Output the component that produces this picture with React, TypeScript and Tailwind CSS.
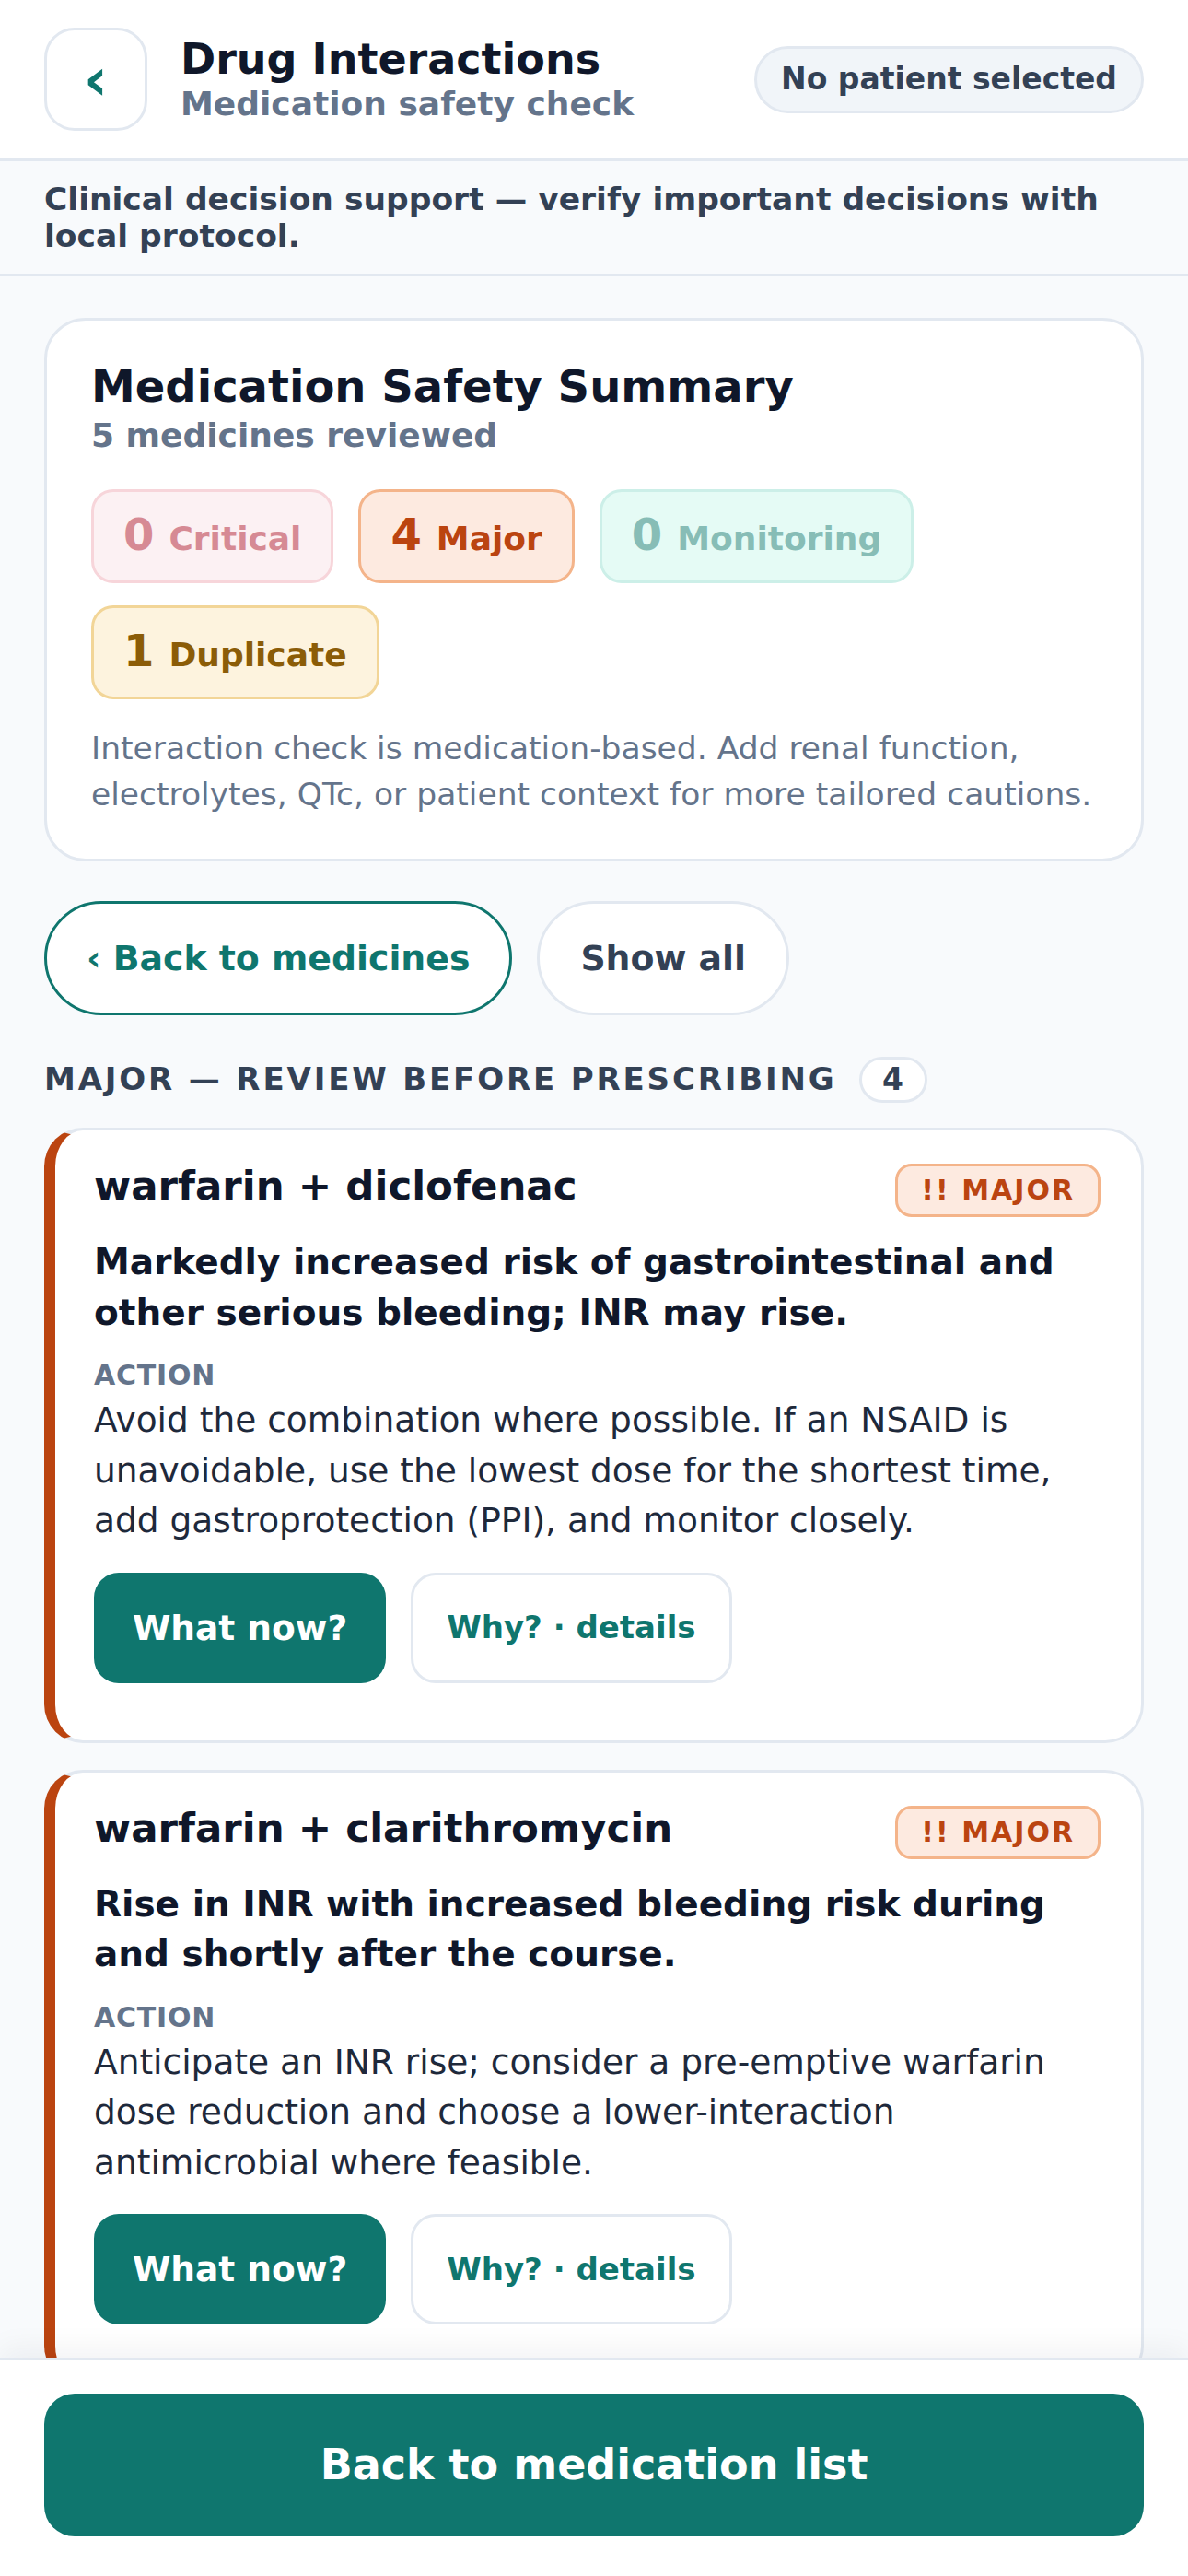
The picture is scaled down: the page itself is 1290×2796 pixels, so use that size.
import React from "react"

type Chip = {
  count: number
  label: string
  className: string
}

type Interaction = {
  id: string
  pair: string
  effect: string
  action: string
}

const chips: Chip[] = [
  { count: 0, label: "Critical", className: "bg-[#fcf1f3] border-[#f7d5da] text-[#d68a94]" },
  { count: 4, label: "Major", className: "bg-[#fdeae0] border-[#f4b48a] text-[#bb4410]" },
  { count: 0, label: "Monitoring", className: "bg-[#e5fbf5] border-[#ccefe8] text-[#87bdb6]" },
  { count: 1, label: "Duplicate", className: "bg-[#fdf3de] border-[#f2d597] text-[#8b5c07]" },
]

const interactions: Interaction[] = [
  {
    id: "warfarin-diclofenac",
    pair: "warfarin + diclofenac",
    effect: "Markedly increased risk of gastrointestinal and other serious bleeding; INR may rise.",
    action:
      "Avoid the combination where possible. If an NSAID is unavoidable, use the lowest dose for the shortest time, add gastroprotection (PPI), and monitor closely.",
  },
  {
    id: "warfarin-clarithromycin",
    pair: "warfarin + clarithromycin",
    effect: "Rise in INR with increased bleeding risk during and shortly after the course.",
    action:
      "Anticipate an INR rise; consider a pre-emptive warfarin dose reduction and choose a lower-interaction antimicrobial where feasible.",
  },
]

function InteractionCard({ item }: { item: Interaction }) {
  return (
    <div className="bg-white border-[3px] border-l-[12px] border-[#e2e8f0] border-l-[#bb4410] rounded-[42px] pt-[36px] pl-[42px] pr-[44px] pb-[62px]">
      <div className="flex items-start justify-between gap-[24px]">
        <h3 className="text-[43.5px] leading-[48px] font-bold text-[#0f172a]">{item.pair}</h3>
        <span className="shrink-0 border-[3px] border-[#f4b48a] bg-[#fdeae0] rounded-[18px] px-[25px] py-[8px] text-[30px] leading-[36px] tracking-[2px] font-bold text-[#bb4410]">
          !! MAJOR
        </span>
      </div>
      <p className="mt-[22px] text-[39px] leading-[54.6px] font-bold text-[#0f172a]">{item.effect}</p>
      <div className="mt-[23px] text-[30px] leading-[36px] tracking-[0.8px] font-bold text-[#64748b]">ACTION</div>
      <p className="mt-[3px] text-[37.5px] leading-[54.5px] text-[#1e293b]">{item.action}</p>
      <div className="mt-[29px] flex gap-[27px]">
        <button className="h-[120px] px-[42px] rounded-[27px] bg-[#0f766e] text-white text-[37.5px] font-bold">
          What now?
        </button>
        <button className="h-[120px] px-[36px] rounded-[27px] border-[3px] border-[#e2e8f0] bg-white text-[#0f766e] text-[34px] font-bold">
          Why? · details
        </button>
      </div>
    </div>
  )
}

export default function App() {
  return (
    <div className="h-[2796px] flex flex-col overflow-hidden bg-[#f8fafc] font-['DejaVu_Sans',sans-serif]">
      {/* Header */}
      <header className="bg-white border-b-[3px] border-[#e2e8f0] px-[48px] py-[30px] flex items-center">
        <button className="w-[112px] h-[112px] shrink-0 border-[3px] border-[#e2e8f0] rounded-[33px] flex items-center justify-center text-[#0f766e]">
          <span className="text-[64px] leading-none font-bold">‹</span>
        </button>
        <div className="ml-[36px] flex-1">
          <h1 className="text-[46px] leading-[52px] font-bold text-[#0f172a]">Drug Interactions</h1>
          <div className="mt-[2px] text-[36px] leading-[42px] font-bold text-[#64748b]">Medication safety check</div>
        </div>
        <span className="h-[73px] px-[26px] flex items-center rounded-full border-[3px] border-[#e2e8f0] bg-[#f1f5f9] text-[33px] font-bold text-[#334155]">
          No patient selected
        </span>
      </header>

      {/* Disclaimer */}
      <div className="px-[48px] py-[21px] border-b-[3px] border-[#e2e8f0] text-[34.5px] leading-[40px] font-bold text-[#334155]">
        Clinical decision support — verify important decisions with local protocol.
      </div>

      {/* Content */}
      <main className="flex-1 overflow-hidden px-[48px] pt-[45px]">
        <section className="bg-white border-[3px] border-[#e2e8f0] rounded-[45px] px-[48px] pt-[46px] pb-[45px]">
          <h2 className="text-[48px] leading-[50px] font-bold text-[#0f172a]">Medication Safety Summary</h2>
          <div className="mt-[7px] text-[36px] leading-[43px] font-bold text-[#64748b]">5 medicines reviewed</div>
          <div className="mt-[37px] flex flex-wrap gap-x-[27px] gap-y-[24px]">
            {chips.map((chip) => (
              <div
                key={chip.label}
                className={`flex items-baseline gap-[16px] px-[32px] py-[18px] rounded-[24px] border-[3px] font-bold ${chip.className}`}
              >
                <span className="text-[48px] leading-[1.2]">{chip.count}</span>
                <span className="text-[36px]">{chip.label}</span>
              </div>
            ))}
          </div>
          <p className="mt-[28px] text-[34.5px] leading-[50px] text-[#64748b]">
            Interaction check is medication-based. Add renal function, electrolytes, QTc, or patient context for more tailored cautions.
          </p>
        </section>

        <div className="mt-[43px] flex gap-[27px]">
          <button className="h-[124px] px-[43px] rounded-full border-[3px] border-[#0f766e] bg-white text-[37.8px] font-bold text-[#0f766e]">
            ‹ Back to medicines
          </button>
          <button className="h-[124px] px-[44px] rounded-full border-[3px] border-[#e2e8f0] bg-white text-[37.8px] font-bold text-[#334155]">
            Show all
          </button>
        </div>

        <div className="mt-[44px] flex items-center gap-[24px]">
          <h2 className="text-[34px] tracking-[2.85px] font-bold text-[#334155]">MAJOR — REVIEW BEFORE PRESCRIBING</h2>
          <span className="w-[74px] h-[50px] flex items-center justify-center rounded-full border-[3px] border-[#e2e8f0] bg-white text-[33px] font-bold text-[#334155]">
            4
          </span>
        </div>

        <div className="mt-[27px] flex flex-col gap-[29px]">
          {interactions.map((item) => (
            <InteractionCard key={item.id} item={item} />
          ))}
        </div>
      </main>

      {/* Footer */}
      <footer className="relative z-10 bg-white border-t-[3px] border-[#e2e8f0] px-[48px] pt-[36px] pb-[43px] shadow-[0_-10px_30px_rgba(15,23,42,0.05)]">
        <button className="w-full h-[155px] rounded-[33px] bg-[#0f766e] text-white text-[46px] font-bold">
          Back to medication list
        </button>
      </footer>
    </div>
  )
}
